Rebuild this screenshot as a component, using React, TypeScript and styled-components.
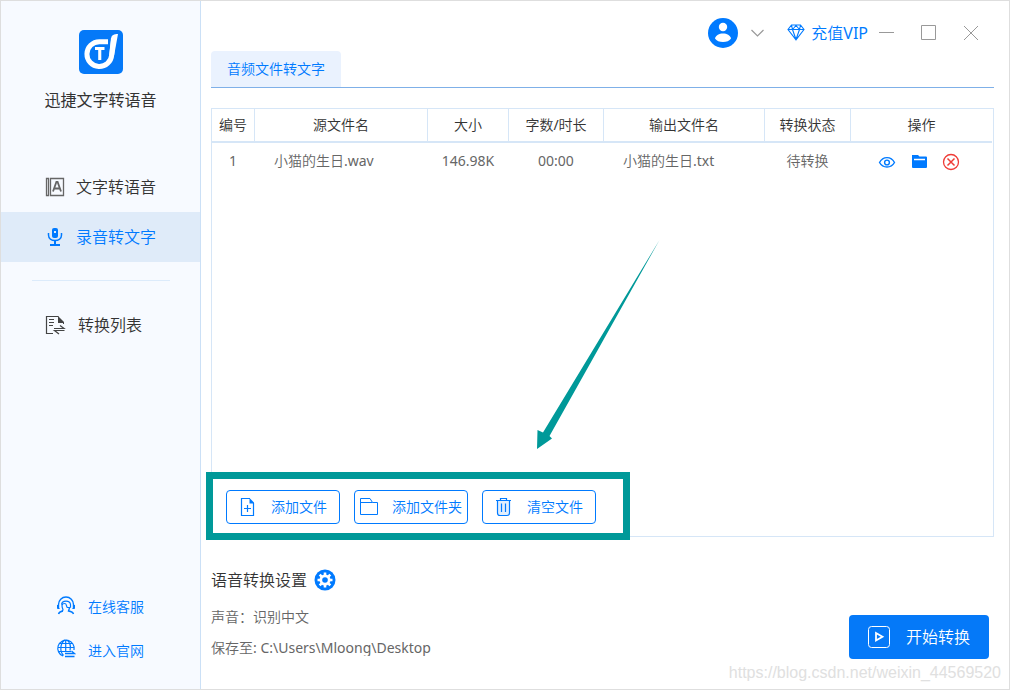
import React from "react";
import styled, { createGlobalStyle } from "styled-components";

const BLUE = "#007aff";
const LINE = "#d6e6f7";
const TEAL = "#009999";

const GlobalStyle = createGlobalStyle`
  * { box-sizing: border-box; }
  body {
    margin: 0;
    background: #fff;
    color: #333;
    font-family: "Noto Sans", "Noto Sans CJK SC DemiLight", "Noto Sans CJK SC", sans-serif;
    font-size: 14px;
    font-weight: 400;
    line-height: 20px;
  }
  button {
    margin: 0;
    padding: 0;
    border: 0;
    background: none;
    color: inherit;
    font: inherit;
    cursor: pointer;
  }
  a { color: inherit; text-decoration: none; }
  h1, h2, p { margin: 0; font-weight: inherit; }
  svg { display: block; flex: none; }
`;

const Window = styled.div`
  position: relative;
  display: flex;
  min-height: 100vh;
  border: 1px solid #dedede;
`;

const Sidebar = styled.aside`
  display: flex;
  flex: none;
  flex-direction: column;
  width: 200px;
  padding: 29px 0 25px;
  border-right: 1px solid #cbe0f6;
  background: #f7faff;
`;

const Brand = styled.div`
  display: flex;
  flex-direction: column;
  align-items: center;
  gap: 14px;
  margin-bottom: 52px;
`;

const BrandName = styled.h1`
  font-family: "Noto Sans CJK SC", sans-serif;
  font-size: 16px;
  line-height: 22px;
`;

const Nav = styled.nav`
  display: flex;
  flex-direction: column;
`;

const NavItem = styled.button<{ $active?: boolean }>`
  display: flex;
  align-items: center;
  gap: 9px;
  height: 50px;
  padding-left: 43px;
  background: ${(p) => (p.$active ? "#dfebf9" : "transparent")};
  color: ${(p) => (p.$active ? BLUE : "#333")};
  font-size: 16px;
`;

const Divider = styled.hr`
  width: 138px;
  margin: 18px 30px 19px 31px;
  border: 0;
  border-top: 1px solid #dcebfb;
`;

const SideLinks = styled.div`
  display: flex;
  flex-direction: column;
  gap: 20px;
  margin-top: auto;
  padding-left: 54px;
`;

const SideLink = styled.a`
  display: flex;
  align-items: center;
  gap: 12px;
  color: ${BLUE};
`;

const Main = styled.main`
  display: flex;
  flex: 1;
  flex-direction: column;
  min-width: 0;
  padding: 14px 15px 30px 10px;
`;

const TitleBar = styled.header`
  display: flex;
  align-items: center;
  justify-content: flex-end;
  height: 36px;
  padding-right: 15px;
`;

const Account = styled.button`
  display: flex;
  align-items: center;
  gap: 13px;
  margin-right: 23px;
`;

const VipLink = styled.a`
  display: flex;
  align-items: center;
  gap: 6px;
  margin-right: 11px;
  color: ${BLUE};
  font-size: 16px;
`;

const WindowControls = styled.div`
  display: flex;
  gap: 26px;
`;

const Tabs = styled.div`
  display: flex;
  border-bottom: 1px solid #7fb0e8;
`;

const Tab = styled.button`
  width: 130px;
  height: 36px;
  border-radius: 4px 4px 0 0;
  background: #eaf2fe;
  color: ${BLUE};
`;

const Panel = styled.section`
  display: flex;
  flex: 1;
  flex-direction: column;
  align-items: flex-start;
  margin: 20px 0 32px;
  padding-right: 1px;
  border: 1px solid ${LINE};
`;

const Table = styled.table`
  width: 100%;
  border-collapse: separate;
  border-spacing: 0;
  table-layout: fixed;
`;

const Th = styled.th<{ $width?: number }>`
  width: ${(p) => (p.$width ? `${p.$width}px` : "auto")};
  height: 34px;
  padding: 0;
  border-right: 1px solid ${LINE};
  border-bottom: 2px solid ${LINE};
  font-weight: inherit;
  text-align: center;
  &:last-child { border-right: 0; }
`;

const Td = styled.td<{ $name?: boolean }>`
  height: 36px;
  padding: ${(p) => (p.$name ? "0 0 0 19px" : "0 1px 0 0")};
  color: #666;
  text-align: ${(p) => (p.$name ? "left" : "center")};
`;

const RowActions = styled.div`
  display: flex;
  justify-content: center;
  gap: 14px;
  padding: 2px 5px 0 0;
`;

const FileActions = styled.div`
  position: relative;
  display: flex;
  gap: 14px;
  margin: auto 14px 12px;
`;

const FileButton = styled.button<{ $tight?: boolean }>`
  display: flex;
  align-items: center;
  gap: ${(p) => (p.$tight ? "13px" : "14px")};
  width: 114px;
  height: 34px;
  padding-left: ${(p) => (p.$tight ? "4px" : "10px")};
  border: 1px solid ${BLUE};
  border-radius: 4px;
  color: ${BLUE};
  white-space: nowrap;
`;

const Callout = styled.div`
  position: absolute;
  top: -18px;
  right: -34px;
  bottom: -16px;
  left: -20px;
  border: 7px solid ${TEAL};
  pointer-events: none;
`;

const Pointer = styled.svg`
  position: absolute;
  bottom: 75px;
  left: 310px;
  pointer-events: none;
`;

const Footer = styled.footer`
  display: flex;
  align-items: flex-end;
  justify-content: space-between;
  padding-right: 5px;
`;

const Settings = styled.div`
  display: flex;
  flex-direction: column;
  min-width: 0;
`;

const SettingsTitle = styled.h2`
  display: flex;
  align-items: center;
  gap: 7px;
  margin-bottom: 17px;
  font-size: 16px;
  line-height: 22px;
`;

const SettingsLine = styled.p`
  height: 17px;
  margin-bottom: 14px;
  overflow: hidden;
  color: #666;
  line-height: 17px;
  white-space: nowrap;
  &:last-child { margin-bottom: 3px; }
`;

const StartButton = styled.button`
  display: flex;
  flex: none;
  align-items: center;
  gap: 15px;
  width: 140px;
  height: 44px;
  padding-left: 18px;
  border-radius: 4px;
  background: #0579f8;
  color: #fff;
  font-size: 16px;
`;

const Watermark = styled.span`
  position: absolute;
  right: 8px;
  bottom: 6px;
  color: #e0e0e0;
  font-family: "Liberation Sans", sans-serif;
  font-size: 16px;
  pointer-events: none;
`;

const Logo = () => (
  <svg width="44" height="44" viewBox="0 0 44 44" aria-hidden="true">
    <rect width="44" height="44" rx="5" fill="#0579f8" />
    <path
      d="M29 11.700H20.300A12.400 12.400 0 1 0 32.700 25L34.500 8"
      fill="none"
      stroke="#fff"
      strokeWidth="5"
    />
    <path d="M32.300 8C32.600 5 35 4 39 4L37 15L35.200 25L30.200 25Z" fill="#fff" />
    <path d="M16 17H25.500V20H22.300V30H19.200V20H16Z" fill="#fff" />
  </svg>
);

const BookIcon = () => (
  <svg width="23" height="22" viewBox="0 0 23 22" fill="none" stroke="#666" aria-hidden="true">
    <path d="M2.500 2.500H4.500V19.500H2.500ZM6.500 2.500H19.500V19.500H6.500Z" strokeWidth="1.300" />
    <path d="M9 15.500L12.400 6H13.600L17 15.500M10.400 12.500H15.600" strokeWidth="1.800" />
  </svg>
);

const MicIcon = () => (
  <svg width="23" height="22" viewBox="0 0 23 22" fill="none" stroke={BLUE} aria-hidden="true">
    <rect x="8" y="2" width="6" height="10" rx="2" fill={BLUE} stroke="none" />
    <rect x="10" y="5" width="2" height="2" fill="#dfebf9" stroke="none" />
    <path d="M4.500 7V9C4.500 12.500 7.500 14.500 11 14.500S17.500 12.500 17.500 9V7" strokeWidth="1.500" />
    <path d="M11 14.500V18M6 19H16" strokeWidth="2" />
  </svg>
);

const ListIcon = () => (
  <svg width="25" height="22" viewBox="0 0 25 22" fill="none" stroke="#444" aria-hidden="true">
    <path d="M9 19.500H2.500V2.500H14.500" strokeWidth="1.200" />
    <path d="M14 2L20 8V9H14Z" fill="#444" stroke="none" />
    <path d="M5 5.500H10M5 8.500H10M5 11.500H9M19.500 8V10" />
    <path d="M10 14.500H20L16 11.500M20.500 16.500H10.500L15 20" strokeWidth="1.200" />
  </svg>
);

const ServiceIcon = () => (
  <svg width="21" height="22" viewBox="0 0 21 22" fill="none" stroke={BLUE} aria-hidden="true">
    <path d="M3.500 13V8.500A7 7 0 0 1 18.500 8.500V13" strokeWidth="1.400" />
    <path d="M15.500 11.500H12.500C11 11 12 7.500 10 7.500C8 7.500 7 8 7 9.500C7 12 8 13 8 14L7 15M6.500 8.500C7 4 15 4 15.500 8.500V11.500" strokeWidth="1.200" />
    <path d="M3.500 18C4 16 5.500 15.500 8 15M18.500 18C18 16 16 15.500 13.500 15L14.500 12" strokeWidth="1.400" />
    <path d="M2.500 9V12.500H4.500M19.500 9V12.500H17.500" />
  </svg>
);

const GlobeIcon = () => (
  <svg width="21" height="26" viewBox="0 0 21 26" fill="none" stroke={BLUE} aria-hidden="true">
    <path d="M8 18A8.200 8.200 0 1 1 19 12M8.500 17.500C4.500 13 5 5.500 10 1.800M11.500 1.800C15 4 16 8 15 12.500M10.700 1.500V13.500M2.500 9.500H19M4 5.500H18M3 13.500H16" strokeWidth="1.200" />
    <path d="M10 15.500H19.500L16.500 13M10 18.500H19.500" strokeWidth="1.300" />
  </svg>
);

const AvatarIcon = () => (
  <svg width="30" height="30" viewBox="0 0 30 30" aria-hidden="true">
    <circle cx="15" cy="15" r="15" fill={BLUE} />
    <circle cx="15" cy="9" r="4.200" fill="#fff" />
    <path d="M7 20.500C8 17 11 15.500 15 15.500S22 17 23 20.500C21.500 23 18.500 24 15 24S8.500 23 7 20.500Z" fill="#fff" />
  </svg>
);

const ChevronIcon = () => (
  <svg width="13" height="8" viewBox="0 0 13 8" fill="none" stroke="#999" strokeWidth="1.200" aria-hidden="true">
    <path d="M.5 1L6.500 7L12.500 1" />
  </svg>
);

const DiamondIcon = () => (
  <svg width="18" height="18" viewBox="0 0 18 18" fill="none" stroke={BLUE} strokeWidth="1.100" aria-hidden="true">
    <path d="M4.500 1H13.500L17 5.500L9 15.800L1 5.500ZM1 5.500H17M4.500 1L5.500 5.500L9 15.500L12.500 5.500L13.500 1M5.500 5.500L9 1.500L12.500 5.500" />
  </svg>
);

const ControlIcon = ({ d }: { d: string }) => (
  <svg width="16" height="16" viewBox="0 0 16 16" fill="none" stroke="#999" aria-hidden="true">
    <path d={d} />
  </svg>
);

const EyeIcon = () => (
  <svg width="18" height="18" viewBox="0 0 18 18" fill="none" stroke={BLUE} strokeWidth="1.400" aria-hidden="true">
    <path d="M1.500 9.500C5 3 13 3 16.500 9.500C13 15.500 5 15.500 1.500 9.500Z" />
    <circle cx="9" cy="9.500" r="2.400" />
  </svg>
);

const OpenFolderIcon = () => (
  <svg width="18" height="18" viewBox="0 0 18 18" aria-hidden="true">
    <path d="M2 2H8L9.500 3.500H16Q17 3.500 17 4.500V14Q17 15 16 15H3Q2 15 2 14Z" fill={BLUE} />
    <path d="M4 6.500H15" stroke="#fff" strokeWidth="1.500" />
  </svg>
);

const RemoveIcon = () => (
  <svg width="18" height="18" viewBox="0 0 18 18" fill="none" stroke="#ef3b36" aria-hidden="true">
    <circle cx="9" cy="9" r="7.500" strokeWidth="1.300" />
    <path d="M5.500 5.500L12.500 12.500M12.500 5.500L5.500 12.500" strokeWidth="1.500" />
  </svg>
);

const AddFileIcon = () => (
  <svg width="20" height="20" viewBox="0 0 20 20" fill="none" stroke={BLUE} aria-hidden="true">
    <path d="M13 1.500H4.500V18.500H16.500V6" strokeWidth="1.200" />
    <path d="M12.500 1L17 5.500V6.500H12.500Z" fill={BLUE} stroke="none" />
    <path d="M10.500 8V15M7 11.500H14" strokeWidth="1.200" />
  </svg>
);

const AddFolderIcon = () => (
  <svg width="20" height="20" viewBox="0 0 20 20" fill="none" stroke={BLUE} aria-hidden="true">
    <path d="M1.500 17.500V1.500H11L13.500 5.500H18.500V17.500ZM1.500 5.500H13.500" />
  </svg>
);

const TrashIcon = () => (
  <svg width="20" height="20" viewBox="0 0 20 20" fill="none" stroke={BLUE} aria-hidden="true">
    <path d="M4.500 4V16Q4.500 18.500 7 18.500H14Q16.500 18.500 16.500 16V4" fill="#e2effd" strokeWidth="1.200" />
    <path d="M3 3.500H18M7.500 3.500V1.500H13.500V3.500M8.500 6.500V15M12.500 6.500V15" strokeWidth="1.200" />
  </svg>
);

const GearIcon = () => (
  <svg width="22" height="22" viewBox="0 0 22 22" aria-hidden="true">
    <circle cx="11" cy="11" r="10.500" fill={BLUE} />
    <circle cx="11" cy="11" r="5.500" fill="#fff" />
    <path
      d="M11 3.500V18.500M3.500 11H18.500M5.700 5.700L16.300 16.300M16.300 5.700L5.700 16.300"
      stroke="#fff"
      strokeWidth="2.600"
    />
    <circle cx="11" cy="11" r="2.800" fill={BLUE} />
  </svg>
);

const PlayIcon = () => (
  <svg width="24" height="24" viewBox="0 0 24 24" fill="none" stroke="#fff" aria-hidden="true">
    <rect x="1.500" y="1.500" width="21" height="21" rx="3" />
    <path d="M9 8V15.500L15.500 11.700Z" strokeWidth="1.800" />
  </svg>
);

const columns = [
  { label: "编号", width: 43 },
  { label: "源文件名", width: 173 },
  { label: "大小", width: 81 },
  { label: "字数/时长", width: 95 },
  { label: "输出文件名", width: 161 },
  { label: "转换状态", width: 86 },
  { label: "操作" },
];

const files = [
  {
    id: 1,
    source: "小猫的生日.wav",
    size: "146.98K",
    length: "00:00",
    output: "小猫的生日.txt",
    status: "待转换",
  },
];

export default function App() {
  return (
    <>
      <GlobalStyle />
      <Window>
        <Sidebar>
          <Brand>
            <Logo />
            <BrandName>迅捷文字转语音</BrandName>
          </Brand>
          <Nav>
            <NavItem><BookIcon />文字转语音</NavItem>
            <NavItem $active aria-current="page"><MicIcon />录音转文字</NavItem>
            <Divider />
            <NavItem><ListIcon />转换列表</NavItem>
          </Nav>
          <SideLinks>
            <SideLink href="#service"><ServiceIcon />在线客服</SideLink>
            <SideLink href="#website"><GlobeIcon />进入官网</SideLink>
          </SideLinks>
        </Sidebar>

        <Main>
          <TitleBar>
            <Account aria-label="账户"><AvatarIcon /><ChevronIcon /></Account>
            <VipLink href="#vip"><DiamondIcon />充值VIP</VipLink>
            <WindowControls>
              <button aria-label="最小化"><ControlIcon d="M0 7.500H15" /></button>
              <button aria-label="最大化"><ControlIcon d="M.5 .5H14.500V14.500H.5Z" /></button>
              <button aria-label="关闭"><ControlIcon d="M1 1L15 15M15 1L1 15" /></button>
            </WindowControls>
          </TitleBar>

          <Tabs role="tablist">
            <Tab role="tab" aria-selected="true">音频文件转文字</Tab>
          </Tabs>

          <Panel>
            <Table>
              <thead>
                <tr>
                  {columns.map((c) => (
                    <Th key={c.label} $width={c.width} scope="col">{c.label}</Th>
                  ))}
                </tr>
              </thead>
              <tbody>
                {files.map((f) => (
                  <tr key={f.id}>
                    <Td>{f.id}</Td>
                    <Td $name>{f.source}</Td>
                    <Td>{f.size}</Td>
                    <Td>{f.length}</Td>
                    <Td $name>{f.output}</Td>
                    <Td>{f.status}</Td>
                    <Td>
                      <RowActions>
                        <button aria-label="查看"><EyeIcon /></button>
                        <button aria-label="打开文件夹"><OpenFolderIcon /></button>
                        <button aria-label="删除"><RemoveIcon /></button>
                      </RowActions>
                    </Td>
                  </tr>
                ))}
              </tbody>
            </Table>
            <FileActions>
              <FileButton><AddFileIcon />添加文件</FileButton>
              <FileButton $tight><AddFolderIcon />添加文件夹</FileButton>
              <FileButton><TrashIcon />清空文件</FileButton>
              <Callout />
              <Pointer width="124" height="209" viewBox="0 0 124 209" aria-hidden="true">
                <path d="M1 209L1.500 190L7 192.500L123.500 0L13.500 196L16 198.500Z" fill={TEAL} />
              </Pointer>
            </FileActions>
          </Panel>

          <Footer>
            <Settings>
              <SettingsTitle>
                语音转换设置
                <button aria-label="设置"><GearIcon /></button>
              </SettingsTitle>
              <SettingsLine>声音：识别中文</SettingsLine>
              <SettingsLine>保存至: C:\Users\Mloong\Desktop</SettingsLine>
            </Settings>
            <StartButton><PlayIcon />开始转换</StartButton>
          </Footer>
        </Main>
        <Watermark>https://blog.csdn.net/weixin_44569520</Watermark>
      </Window>
    </>
  );
}
